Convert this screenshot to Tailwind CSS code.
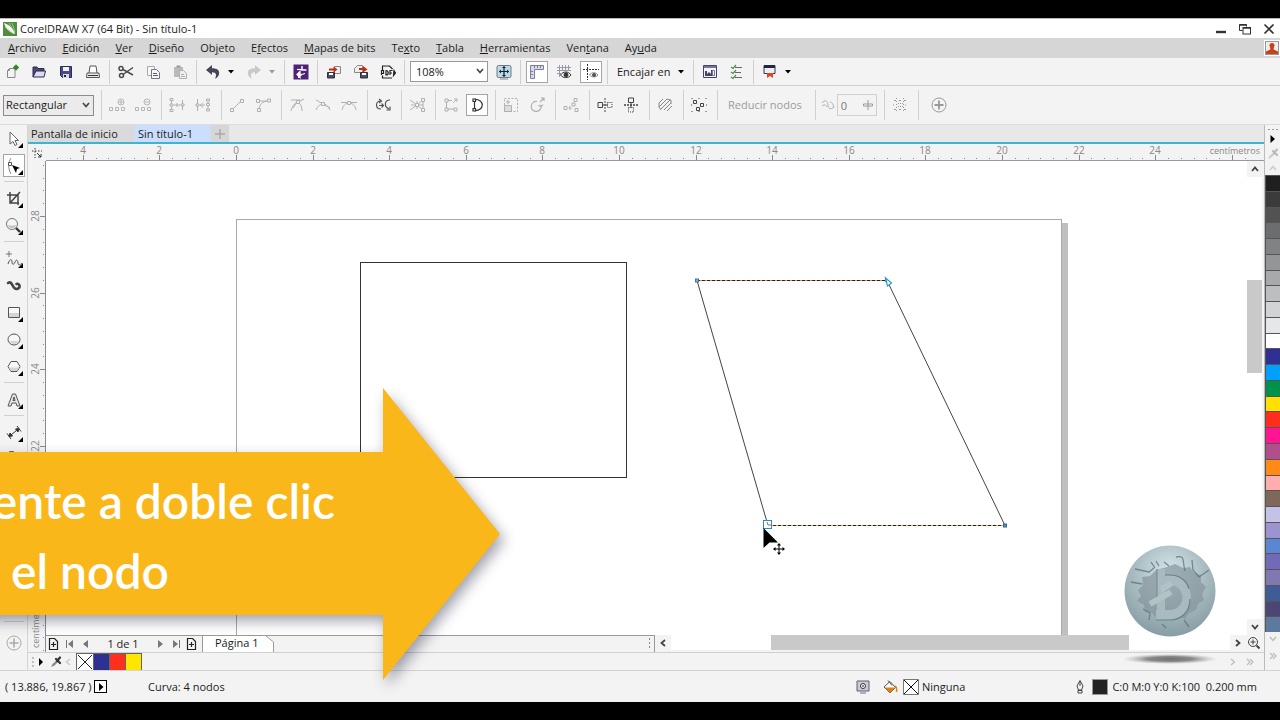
<!DOCTYPE html>
<html lang="es">
<head>
    <meta charset="UTF-8">
    <meta name="viewport" content="width=device-width, initial-scale=1.0">
    <title>CorelDRAW X7 (64 Bit) - Sin título-1</title>
    <script src="https://cdn.jsdelivr.net/npm/@tailwindcss/browser@4"></script>
    <style>
        body { font-family: 'Open Sans', 'Noto Sans', sans-serif; }
    </style>
</head>
<body class="bg-black text-[11px] leading-4 text-[#1c1c1c]">
<div class="relative flex h-screen flex-col overflow-hidden py-[18px]">

    <!-- Title bar -->
    <header class="flex h-5 shrink-0 items-center border-t border-[#bbb] bg-white pl-[3px] pr-1">
        <svg class="size-3.5" viewBox="0 0 14 14"><rect width="14" height="14" fill="#4f8f3c"/><path d="M1 1c3 1 9 4 11 11C7 11 2 6 1 1z" fill="#fff"/><path d="M6 1l6 10M2 5l9 7M9 1l3 9" stroke="#a9cf9b" stroke-width=".8"/></svg>
        <h1 class="ml-[3px]">CorelDRAW X7 (64 Bit) - Sin título-1</h1>
        <div class="ml-auto flex items-center gap-2.5">
            <button aria-label="Minimizar" class="grid size-3.5 place-items-center"><svg class="size-3" viewBox="0 0 12 12"><path d="M1 9h10" stroke="#333" stroke-width="2.4"/></svg></button>
            <button aria-label="Restaurar" class="grid size-3.5 place-items-center"><svg class="size-3" viewBox="0 0 12 12" fill="none" stroke="#333"><path d="M3.5 7.5h-3v-6h7v2"/><path d="M.5 2h7M4 5h8" stroke-width="1.5"/><rect x="4" y="4.5" width="7.5" height="6.5"/></svg></button>
            <button aria-label="Cerrar" class="grid size-3.5 place-items-center"><svg class="size-3" viewBox="0 0 12 12"><path d="M1.5 1.5l9 9M10.5 1.5l-9 9" stroke="#333" stroke-width="1.7"/></svg></button>
        </div>
    </header>

    <!-- Menu bar -->
    <nav class="flex h-5 shrink-0 items-center gap-4 bg-[#d6d6d6] pl-2">
        <a href="#"><u>A</u>rchivo</a>
        <a href="#"><u>E</u>dición</a>
        <a href="#"><u>V</u>er</a>
        <a href="#"><u>D</u>iseño</a>
        <a href="#">Ob<u>j</u>eto</a>
        <a href="#">E<u>f</u>ectos</a>
        <a href="#"><u>M</u>apas de bits</a>
        <a href="#">Te<u>x</u>to</a>
        <a href="#"><u>T</u>abla</a>
        <a href="#"><u>H</u>erramientas</a>
        <a href="#">Ven<u>t</u>ana</a>
        <a href="#">Ay<u>u</u>da</a>
        <button aria-label="Cuenta" class="ml-auto size-4 bg-white p-px"><svg class="size-3.5" viewBox="0 0 14 14"><rect x=".5" y=".5" width="13" height="13" fill="#eee" stroke="#999"/><path d="M7 2c3 0 3 3 1.7 5v1.5L13 10.5V13H1v-2.5l4.3-2V7C4 5 4 2 7 2z" fill="#c5431a"/></svg></button>
    </nav>

    <!-- Standard toolbar -->
    <div class="flex h-7 shrink-0 items-center gap-[5px] border-b border-[#d0d0d0] bg-[#f3f3f3] pl-px">
        <button aria-label="Nuevo" class="grid size-[22px] place-items-center"><svg class="size-4" viewBox="0 0 16 16" fill="none" stroke="#888"><path d="M5.5 4.5H11v9H3.500v-7zM5.500 4.500v2h-2"/><circle cx="12" cy="3.500" r="2" fill="#2c8a1e" stroke="#2c8a1e"/><path d="M12 .5v6M9 3.500h6" stroke="#2c8a1e"/></svg></button>
        <button aria-label="Abrir" class="grid size-[22px] place-items-center"><svg class="size-4" viewBox="0 0 16 16"><path d="M2 13V3h4l1 1.500h6V7" fill="#4a4a73" stroke="#2c2c50"/><path d="M2 13l3-6h9.500L13 13z" fill="#dcdcf0" stroke="#2c2c50"/></svg></button>
        <button aria-label="Guardar" class="grid size-[22px] place-items-center"><svg class="size-4" viewBox="0 0 16 16"><path d="M2.500 2.500h11v11h-9l-2-2z" fill="#4b4b86" stroke="#2c2c55"/><path d="M5 3h6v4H5z" fill="#f2f2fa"/><path d="M5 10h6v4H5z" fill="#d9d9e8"/><path d="M6 11h2v2H6z" fill="#222"/></svg></button>
        <button aria-label="Imprimir" class="grid size-[22px] place-items-center"><svg class="size-4" viewBox="0 0 16 16" fill="#fff" stroke="#555"><path d="M4 9l1-7h6l1 7"/><path d="M2 9h12l.5 4.500h-13z" fill="#ececec"/><path d="M3 11.500h10" stroke="#333"/></svg></button>
        <span class="h-6 w-px bg-[#cfcfcf]"></span>
        <button aria-label="Cortar" class="grid size-[22px] place-items-center"><svg class="size-4" viewBox="0 0 16 16" fill="none" stroke="#4a4a4a" stroke-width="1.500"><circle cx="3" cy="4.500" r="2"/><circle cx="3.500" cy="11.500" r="2"/><path d="M5 5.500l10 5.500M5 10.500L15 3.500"/></svg></button>
        <button aria-label="Copiar" class="grid size-[22px] place-items-center"><svg class="size-4" viewBox="0 0 16 16" fill="#f6f6f6" stroke="#777"><path d="M2.500 2.500h7v9h-7z" stroke="#aaa"/><path d="M6.500 5.500h5l3 3v6h-8z"/><path d="M8 9.500h4M8 11.500h5" stroke="#5c5c80"/></svg></button>
        <button aria-label="Pegar" class="grid size-[22px] place-items-center"><svg class="size-4" viewBox="0 0 16 16"><path d="M2 3h9v10H2z" fill="#b9b9b9"/><path d="M4.500 1.500h4v2h-4z" fill="#999"/><path d="M7.500 6.500h4l3 3v5h-7z" fill="#eee" stroke="#b0b0b0"/><path d="M9 10.500h3M9 12.500h4" stroke="#b0b0b0"/></svg></button>
        <span class="h-6 w-px bg-[#cfcfcf]"></span>
        <div class="flex">
            <button aria-label="Deshacer" class="grid size-[22px] place-items-center"><svg class="size-4" viewBox="0 0 16 16"><path d="M1 6l6-5v3.200c5 0 8 2 7 6-.5 2-2 3.500-4 4.500 1.500-3 2-6.500-3-6.500V11z" fill="#45455a"/></svg></button>
            <button aria-label="Lista de deshacer" class="grid w-3.5 place-items-center"><svg class="h-1 w-1.5" viewBox="0 0 6 4"><path d="M0 0h6L3 3.500z"/></svg></button>
        </div>
        <div class="flex">
            <button aria-label="Rehacer" class="grid size-[22px] place-items-center"><svg class="size-4" viewBox="0 0 16 16"><path d="M15 6L9 1v3.200c-5 0-8 2-7 6 .5 2 2 3.500 4 4.500-1.500-3-2-6.500 3-6.500V11z" fill="#c9c9c9"/></svg></button>
            <button aria-label="Lista de rehacer" class="grid w-3.5 place-items-center"><svg class="h-1 w-1.5" viewBox="0 0 6 4"><path d="M0 0h6L3 3.500z" fill="#999"/></svg></button>
        </div>
        <span class="h-6 w-px bg-[#cfcfcf]"></span>
        <button aria-label="Buscar contenido" class="grid size-[22px] place-items-center"><svg class="size-4" viewBox="0 0 16 16"><path d="M.5.500h15v15H.5z" fill="#4d2277"/><path d="M9 2v4h4.500" fill="none" stroke="#fff" stroke-width="1.500"/><path d="M5.500 14v-3.500c4 0 6 0 6-1.500M4 10.500l3-3v6z" fill="#fff" stroke="#fff" stroke-width="1.200"/><path d="M4 5.500h5" stroke="#fff" stroke-width="1.200"/></svg></button>
        <span class="h-6 w-px bg-[#cfcfcf]"></span>
        <button aria-label="Importar" class="grid size-[22px] place-items-center"><svg class="size-4" viewBox="0 0 16 16"><path d="M8.500 2.500h6v7h-6z" fill="#eee" stroke="#888"/><path d="M1.500 8.500h7v5.500h-7z" fill="#4b4b70" stroke="#333"/><path d="M3 9h4v2H3z" fill="#fff"/><path d="M3 5.500h5" stroke="#c22a12" stroke-width="2"/><path d="M7.500 2.500l4 3-4 3z" fill="#c22a12"/></svg></button>
        <button aria-label="Exportar" class="grid size-[22px] place-items-center"><svg class="size-4" viewBox="0 0 16 16"><path d="M1.500 8.500v-4l3-3h5v7z" fill="#eee" stroke="#888"/><path d="M7.500 8.500h7v5.500h-7z" fill="#4b4b70" stroke="#333"/><path d="M9 9h4v2H9z" fill="#fff"/><path d="M6 5h5" stroke="#c22a12" stroke-width="2"/><path d="M10 2l4.500 3.500L10 8.500z" fill="#c22a12"/></svg></button>
        <button aria-label="Publicar en PDF" class="grid size-[22px] place-items-center"><svg class="size-4" viewBox="0 0 16 16" fill="none" stroke="#222" stroke-width="1.200"><path d="M2.500 6V2h7l3 3M2.500 11.500V14h9.500"/><path d="M1.500 11V6.500h2v3h-2M6 11a2 2 0 100-4.500zM10 11V6.500h2.500M10 9h2"/><path d="M14 6.500l1.500 2.500-2 2.500z" fill="#222"/></svg></button>
        <span class="h-6 w-px bg-[#cfcfcf]"></span>
        <div class="relative">
            <select aria-label="Niveles de zoom" class="block h-[21px] w-[78px] appearance-none border border-[#999] bg-white pl-[5px]"><option>108%</option></select>
            <svg class="pointer-events-none absolute right-1 top-[7px] h-1.5 w-2" viewBox="0 0 8 6"><path d="M1 1l3 3.500L7 1" fill="none" stroke="#444" stroke-width="1.600"/></svg>
        </div>
        <button aria-label="Vista previa a pantalla completa" class="grid size-[22px] place-items-center"><svg class="size-4" viewBox="0 0 16 16"><rect x="1" y="1.500" width="14" height="12" rx="1.500" fill="#b9dce4" stroke="#778"/><path d="M8 3v9M3.500 7.500h9" stroke="#123" stroke-width="1.200"/><path d="M8 2l2 2H6zM8 13l2-2H6zM3 7.500l2-2v4zM13 7.500l-2-2v4z" fill="#123"/><path d="M4 15h8" stroke="#889"/></svg></button>
        <span class="h-6 w-px bg-[#cfcfcf]"></span>
        <button aria-label="Mostrar reglas" class="grid size-[22px] place-items-center border border-[#a5a5a5] bg-white"><svg class="size-4" viewBox="0 0 16 16"><path d="M1.500 1.500h13v4h-9v9h-4z" fill="#d7d9ea" stroke="#7c7f9c"/><path d="M5.500 2v2M8.500 2v2M11.500 2v2M2 7.500h2M2 10.500h2" stroke="#7c7f9c"/></svg></button>
        <button aria-label="Mostrar cuadrícula" class="grid size-[22px] place-items-center"><svg class="size-4" viewBox="0 0 16 16" fill="none" stroke="#9a9aac"><path d="M1 3.500h14M1 6.500h14M1 9.500h4M3.500 1v12M6.500 1v6M9.500 1v6M12.500 1v6"/><path d="M4.500 11c2.500-4 8-4 10.500 0-2.500 3.500-8 3.500-10.500 0z" fill="#fff" stroke="#333"/><circle cx="10" cy="10.800" r="2" fill="#333" stroke="#333"/></svg></button>
        <button aria-label="Mostrar líneas guía" class="grid size-[22px] place-items-center border border-[#a5a5a5] bg-white"><svg class="size-4" viewBox="0 0 16 16" fill="none" stroke="#333"><path d="M4.500 0v16M0 5.500h16" stroke-dasharray="2 1"/><path d="M6.500 11c2-3 6.500-3 8.500 0-2 2.500-6.500 2.500-8.500 0z" fill="#fff" stroke="#888"/><circle cx="11" cy="11" r="1.500" fill="#555" stroke="#555"/></svg></button>
        <span class="h-6 w-px bg-[#cfcfcf]"></span>
        <button class="flex items-center gap-2 px-1">Encajar en <svg class="h-1 w-1.5" viewBox="0 0 6 4"><path d="M0 0h6L3 3.500z"/></svg></button>
        <span class="h-6 w-px bg-[#cfcfcf]"></span>
        <button aria-label="Opciones" class="grid size-[22px] place-items-center"><svg class="size-4" viewBox="0 0 16 16"><path d="M1.500 1.500h13v12h-13z" fill="#f4f4fa" stroke="#44446a"/><path d="M2 2h12v2H2z" fill="#77779a"/><path d="M3 7h2v3l2-2 2 2V6h2v6H3z" fill="#44446a"/><path d="M10.500 6.500h2v5h-2z" fill="#fff" stroke="#77779a"/></svg></button>
        <button aria-label="Lista de opciones" class="grid size-[22px] place-items-center"><svg class="size-4" viewBox="0 0 16 16" fill="none"><path d="M6 3.500h7M6 8.500h6M6 13.500h7" stroke="#666"/><path d="M2 3l2 1.500L7 1M2 8l2 1.500L7 6M2 13l2 1.500L7 11" stroke="#4f8a4f" stroke-width="1.200"/></svg></button>
        <span class="h-6 w-px bg-[#cfcfcf]"></span>
        <div class="flex">
            <button aria-label="Iniciador de aplicaciones" class="grid size-[22px] place-items-center"><svg class="size-4" viewBox="0 0 16 16"><path d="M2 1.500h11v8H2z" fill="#eceef4" stroke="#333a50"/><path d="M2 1h11v3H2z" fill="#20263c"/><path d="M5 9h6v5l-3-2-3 2z" fill="#e2471b"/></svg></button>
            <button aria-label="Más aplicaciones" class="grid w-3.5 place-items-center"><svg class="h-1 w-1.5" viewBox="0 0 6 4"><path d="M0 0h6L3 3.500z"/></svg></button>
        </div>
    </div>

    <!-- Property bar -->
    <div class="flex h-[39px] shrink-0 items-center gap-1 border-b border-[#dcdcdc] bg-[#f3f3f3] pl-[3px]">
        <div class="relative">
            <select aria-label="Modo de selección" class="block h-[21px] w-[91px] appearance-none border border-[#8c8c8c] bg-[#ebebeb] pl-[2px]"><option>Rectangular</option></select>
            <svg class="pointer-events-none absolute right-1 top-[7px] h-1.5 w-2" viewBox="0 0 8 6"><path d="M1 1l3 3.500L7 1" fill="none" stroke="#444" stroke-width="1.600"/></svg>
        </div>
        <span class="h-[30px] w-1 border-r border-[#d0d0d0]"></span>
        <button aria-label="Añadir nodos" class="grid size-[22px] place-items-center"><svg class="size-4" viewBox="0 0 16 16" fill="none" stroke="#b5b5b5"><path d="M.5 10.500h3v3h-3zM6.500 10.500h3v3h-3zM12.500 10.500h3v3h-3z"/><circle cx="12" cy="5" r="3"/><path d="M12 3v4M10 5h4"/></svg></button>
        <button aria-label="Eliminar nodos" class="grid size-[22px] place-items-center"><svg class="size-4" viewBox="0 0 16 16" fill="none" stroke="#b5b5b5"><path d="M.5 10.500h3v3h-3zM6.500 10.500h3v3h-3zM12.500 10.500h3v3h-3z"/><circle cx="12" cy="5" r="3"/><path d="M10 5h4"/></svg></button>
        <span class="h-[30px] w-1 border-r border-[#d0d0d0]"></span>
        <button aria-label="Unir dos nodos" class="grid size-[22px] place-items-center"><svg class="size-4" viewBox="0 0 16 16" fill="none" stroke="#b0b0b0"><path d="M2.500 3.500v3M2.500 9.500v3M13.500 3v10M5 8h6M8 6v4"/><path d="M1 1.500h3v2H1zM1 7h3v2H1zM12 7h3v2h-3zM1 12.500h3v2H1z" fill="#f3f3f3"/></svg></button>
        <button aria-label="Separar curva" class="grid size-[22px] place-items-center"><svg class="size-4" viewBox="0 0 16 16" fill="none" stroke="#b0b0b0"><path d="M2.500 2v12M13 4v2M13 9v4M5 8h5M8 5.500L5.500 8 8 10.500"/><path d="M1 7h3v2H1zM11.500 2h3v2h-3zM11.500 6.500h3v2h-3zM11.500 12h3v2h-3z" fill="#f3f3f3"/></svg></button>
        <span class="h-[30px] w-1 border-r border-[#d0d0d0]"></span>
        <button aria-label="Convertir a línea" class="grid size-[22px] place-items-center"><svg class="size-4" viewBox="0 0 16 16" fill="none" stroke="#b0b0b0"><path d="M3.500 12.500l9-9"/><path d="M1.500 11.500h3v3h-3zM11.500 2.500h3v3h-3z" fill="#f3f3f3"/></svg></button>
        <button aria-label="Convertir a curvas" class="grid size-[22px] place-items-center"><svg class="size-4" viewBox="0 0 16 16" fill="none" stroke="#b0b0b0"><path d="M4 13c0-5 3-9 10-9"/><path d="M3.500 4h8"/><path d="M2.500 11.500h3v3h-3zM1.500 2.500h3v3h-3zM12.500 2h3v3h-3z" fill="#f3f3f3"/></svg></button>
        <span class="h-[30px] w-1 border-r border-[#d0d0d0]"></span>
        <button aria-label="Nodo asimétrico" class="grid size-[22px] place-items-center"><svg class="size-4" viewBox="0 0 16 16" fill="none" stroke="#b0b0b0"><path d="M2 14c1-4 3-8 7-9M9 5c3 2 4 5 4 9M8 5L4 11M9 5l6-3M2 3h9"/><path d="M7.500 3.500h3v3h-3z" fill="#f3f3f3"/></svg></button>
        <button aria-label="Nodo uniforme" class="grid size-[22px] place-items-center"><svg class="size-4" viewBox="0 0 16 16" fill="none" stroke="#b0b0b0"><path d="M1 13c1-3 4-6 7-6s6 3 7 6M1 3l14 8"/><path d="M6.500 5.500h3v3h-3z" fill="#f3f3f3"/></svg></button>
        <button aria-label="Nodo simétrico" class="grid size-[22px] place-items-center"><svg class="size-4" viewBox="0 0 16 16" fill="none" stroke="#b0b0b0"><path d="M1 13c1-5 4-7 7-7s6 2 7 7M0 5.500h16"/><path d="M6.500 4.500h3v3h-3z" fill="#f3f3f3"/></svg></button>
        <span class="h-[30px] w-1 border-r border-[#d0d0d0]"></span>
        <button aria-label="Invertir dirección" class="grid size-[22px] place-items-center"><svg class="size-4" viewBox="0 0 16 16" fill="none" stroke="#555" stroke-width="1.200"><path d="M6 4C0 4 0 12 6 12M4 2l2.500 2L4 6M4 8.500h4M6.500 6.500l2 2-2 2M15 3c-6 0-6 7-1 9M15 9.500v3.500h-3.500"/></svg></button>
        <span class="h-[30px] w-1 border-r border-[#d0d0d0]"></span>
        <button aria-label="Extraer subtrayecto" class="grid size-[22px] place-items-center"><svg class="size-4" viewBox="0 0 16 16" fill="none" stroke="#b0b0b0"><path d="M1 3l7 5-7 5M14 3L8 8l6 5M8 4v8M14 3v10M2 8h12"/><path d="M6.500 6.500h3v3h-3zM12.500 1.500h3v3h-3zM12.500 11.500h3v3h-3z" fill="#f3f3f3"/></svg></button>
        <span class="h-[30px] w-1 border-r border-[#d0d0d0]"></span>
        <button aria-label="Extender curva" class="grid size-[22px] place-items-center"><svg class="size-4" viewBox="0 0 16 16" fill="none" stroke="#b0b0b0"><path d="M3.500 5v7h8M5 3.500h4"/><path d="M2 2h3v3H2zM2 11h3v3H2zM11 11h3v3h-3z" fill="#f3f3f3"/><path d="M10 6l4-4M11 2h3v3"/></svg></button>
        <button aria-label="Cerrar curva" class="grid size-[22px] place-items-center border border-[#a5a5a5] bg-white"><svg class="size-4" viewBox="0 0 16 16" fill="none" stroke="#333" stroke-width="1.200"><path d="M5 2.500c11-1 11 12 0 11M5.500 5v6"/><path d="M4 2h2.500v2.500H4zM4 11.500h2.500V14H4z" fill="#fff"/></svg></button>
        <span class="h-[30px] w-1 border-r border-[#d0d0d0]"></span>
        <button aria-label="Estirar nodos" class="grid size-[22px] place-items-center"><svg class="size-4" viewBox="0 0 16 16" fill="none" stroke="#b0b0b0"><path d="M1.500 1.500h13v13h-13z" stroke-dasharray="2 1.500"/><path d="M1.500 8.500h7v6h-7z" fill="#ddd"/><path d="M5 3v4M3 5h4"/></svg></button>
        <button aria-label="Rotar nodos" class="grid size-[22px] place-items-center"><svg class="size-4" viewBox="0 0 16 16" fill="none" stroke="#b0b0b0" stroke-width="1.200"><path d="M12 8a5 5 0 11-4-3.500M9.500 8l2.500 2 2-2.500M11 5l4-4M12 1h3v3"/></svg></button>
        <span class="h-[30px] w-1 border-r border-[#d0d0d0]"></span>
        <button aria-label="Alinear nodos" class="grid size-[22px] place-items-center"><svg class="size-4" viewBox="0 0 16 16" fill="none" stroke="#b0b0b0"><path d="M1 9.500h3v3H1zM11 1.500h3v3h-3zM12 11.500h3v3h-3zM7 9v4M5.500 11h3M9 6h3v3H9z"/></svg></button>
        <span class="h-[30px] w-1 border-r border-[#d0d0d0]"></span>
        <button aria-label="Reflejar horizontalmente" class="grid size-[22px] place-items-center"><svg class="size-4" viewBox="0 0 16 16" fill="none" stroke="#444"><path d="M1 5.500h4.500v5H1z"/><path d="M10.500 5.500H15v5h-4.500z" stroke-dasharray="1 1"/><path d="M8 1v14" stroke-dasharray="2 1"/><path d="M5 8h6"/></svg></button>
        <button aria-label="Reflejar verticalmente" class="grid size-[22px] place-items-center"><svg class="size-4" viewBox="0 0 16 16" fill="none" stroke="#444"><path d="M5.500 1h5v4.500h-5z"/><path d="M5.500 10.500h5V15h-5z" stroke-dasharray="1 1"/><path d="M1 8h14" stroke-dasharray="2 1" stroke-width="1.500"/><path d="M8 5v6"/></svg></button>
        <span class="h-[30px] w-1 border-r border-[#d0d0d0]"></span>
        <button aria-label="Modo elástico" class="grid size-[22px] place-items-center"><svg class="size-4" viewBox="0 0 16 16" fill="none" stroke="#888"><path d="M2 6l4-4M2 10l8-8M4 12l9-9M7 13l7-7M10 14l5-5M2 6v4l2 3M10 2l4 1v4"/></svg></button>
        <span class="h-[30px] w-1 border-r border-[#d0d0d0]"></span>
        <button aria-label="Seleccionar todos los nodos" class="grid size-[22px] place-items-center"><svg class="size-4" viewBox="0 0 16 16" fill="none" stroke="#444"><path d="M2.500 3.500h3v3h-3zM9.500 6.500h3v3h-3zM5.500 10.500h3v3h-3z"/><path d="M.5 1.500h15v13H.5z" stroke-dasharray="1 6"/></svg></button>
        <span class="h-[30px] w-1 border-r border-[#d0d0d0]"></span>
        <button class="px-1.5 text-[#9b9b9b]">Reducir nodos</button>
        <span class="h-[30px] w-1 border-r border-[#d0d0d0]"></span>
        <label class="flex items-center text-[#777]">
            <svg class="mr-px size-4" viewBox="0 0 16 16" fill="none" stroke="#b0b0b0"><path d="M2 6c3-4 6-2 6 2s3 5 6 2M2 9c3-2 4-1 5 1M10 5c2 0 3 2 4 6"/></svg>
            <span class="relative">
                <input type="text" aria-label="Suavidad de curva" value="0" class="block h-[22px] w-10 border border-[#d0d0d0] bg-transparent pl-[3px]">
                <svg class="pointer-events-none absolute right-1 top-1.5 size-2.5" viewBox="0 0 10 10" fill="#fff" stroke="#999"><path d="M.5 4h9v2h-9zM5 0v10"/></svg>
            </span>
        </label>
        <span class="h-[30px] w-1 border-r border-[#d0d0d0]"></span>
        <button aria-label="Recuadro delimitador" class="grid size-[22px] place-items-center"><svg class="size-4" viewBox="0 0 16 16" fill="none" stroke="#999"><path d="M2 3.500h12M2 12.500h12" stroke-dasharray="2 3"/><path d="M4.500 1v14M11.500 1v14" stroke-dasharray="1 2"/><path d="M6 6.500h5M6 9.500h5M1 8h2M13 8h2" stroke-dasharray="1 1"/></svg></button>
        <span class="h-[30px] w-1 border-r border-[#d0d0d0]"></span>
        <button aria-label="Personalizar" class="grid h-[22px] w-8 place-items-center"><svg class="size-4" viewBox="0 0 16 16" fill="none" stroke="#999"><circle cx="8" cy="8" r="7"/><path d="M8 3.500v9M3.500 8h9" stroke-width="1.800"/></svg></button>
    </div>

    <div class="flex min-h-0 flex-1 bg-[#f3f3f3]">

        <!-- Toolbox -->
        <aside class="flex w-7 shrink-0 flex-col items-center gap-1 border-r border-[#d4d4d4] pb-4 pt-[2px]">
            <button aria-label="Selección" class="grid h-[23px] w-[22px] shrink-0 place-items-center"><svg class="size-[18px]" viewBox="0 0 18 18"><path d="M5 2v12l3-2.500 2 4 2-1-2-4h3.500z" fill="#fff" stroke="#666"/><path d="M18 13v5h-5z"/></svg></button>
            <button aria-label="Forma" class="grid h-[23px] w-[22px] shrink-0 place-items-center border border-[#a5a5a5] bg-white"><svg class="size-[18px]" viewBox="0 0 18 18"><path d="M6 1C3 5 3 12 6 17" fill="none" stroke="#888"/><path d="M3.500 5.500h3v3h-3z" fill="#fff" stroke="#555"/><path d="M7 8l8 3-3 1-1 4z"/><path d="M18 13v5h-5z"/></svg></button>
            <span class="h-0.5 w-5 shrink-0 border-t border-[#d0d0d0]"></span>
            <button aria-label="Recortar" class="grid h-[23px] w-[22px] shrink-0 place-items-center"><svg class="size-[18px]" viewBox="0 0 18 18" fill="none" stroke="#444" stroke-width="1.500"><path d="M5 2v11h9M2 5h11v10M5 13l10-11"/><path d="M18 13v5h-5z" fill="#000" stroke="none"/></svg></button>
            <button aria-label="Zoom" class="grid h-[23px] w-[22px] shrink-0 place-items-center"><svg class="size-[18px]" viewBox="0 0 18 18"><circle cx="7" cy="7" r="5.500" fill="#f4f4f4" stroke="#777"/><path d="M3 8c2 1 6 1 8 0-1 4-7 4-8 0z" fill="#bbb"/><path d="M11 11l4 4" stroke="#333" stroke-width="2.400"/><path d="M18 13v5h-5z"/></svg></button>
            <span class="h-0.5 w-5 shrink-0 border-t border-[#d0d0d0]"></span>
            <button aria-label="Mano alzada" class="grid h-[23px] w-[22px] shrink-0 place-items-center"><svg class="size-[18px]" viewBox="0 0 18 18" fill="none" stroke="#777"><path d="M4 1v6M1 4h6"/><path d="M3 14c2-6 4-5 4-2s2 3 3 0 3-2 3 1 2 2 4 0" stroke="#555"/><path d="M18 13v5h-5z" fill="#000" stroke="none"/></svg></button>
            <button aria-label="Medios artísticos" class="grid h-[23px] w-[22px] shrink-0 place-items-center"><svg class="size-[18px]" viewBox="0 0 18 18" fill="none" stroke="#444" stroke-linecap="round"><path d="M3 6c5-3 4 7 9 6 4-1 3-6-.5-5" stroke-width="2.600"/></svg></button>
            <button aria-label="Rectángulo" class="grid h-[23px] w-[22px] shrink-0 place-items-center"><svg class="size-[18px]" viewBox="0 0 18 18"><path d="M3.500 3.500h11v10h-11z" fill="#f8f8f8" stroke="#555"/><path d="M4 9h10v4H4z" fill="#d5d5d5"/><path d="M18 13v5h-5z"/></svg></button>
            <button aria-label="Elipse" class="grid h-[23px] w-[22px] shrink-0 place-items-center"><svg class="size-[18px]" viewBox="0 0 18 18"><ellipse cx="9" cy="8.500" rx="6" ry="5.500" fill="#f8f8f8" stroke="#555"/><path d="M4 10h10c-2 4-8 4-10 0z" fill="#d5d5d5"/><path d="M18 13v5h-5z"/></svg></button>
            <button aria-label="Polígono" class="grid h-[23px] w-[22px] shrink-0 place-items-center"><svg class="size-[18px]" viewBox="0 0 18 18"><path d="M6 3.500h6l3 5-3 5H6l-3-5z" fill="#f8f8f8" stroke="#555"/><path d="M4 9.500h10L12 13H6z" fill="#d5d5d5"/><path d="M18 13v5h-5z"/></svg></button>
            <span class="h-0.5 w-5 shrink-0 border-t border-[#d0d0d0]"></span>
            <button aria-label="Texto" class="grid h-[23px] w-[22px] shrink-0 place-items-center"><svg class="size-[18px]" viewBox="0 0 18 18"><path d="M3 15L7.500 3h3L15 15h-3l-1-3H7l-1 3zM8 9.500h2L9 6z" fill="#e4e4ea" stroke="#555"/><path d="M18 13v5h-5z"/></svg></button>
            <span class="h-0.5 w-5 shrink-0 border-t border-[#d0d0d0]"></span>
            <button aria-label="Cota paralela" class="grid h-[23px] w-[22px] shrink-0 place-items-center"><svg class="size-[18px]" viewBox="0 0 18 18" stroke="#333"><path d="M4 12.500l10-8M2 9.500l4 5.500M12 2l4 5.500" fill="none"/><path d="M4 12.500l1-3.500 2.500 3zM14 4.500L10.500 5l2.500 3z" fill="#333"/><path d="M18 13v5h-5z" fill="#000" stroke="none"/></svg></button>
            <button aria-label="Conector" class="grid h-[23px] w-[22px] shrink-0 place-items-center"><svg class="size-[18px]" viewBox="0 0 18 18" fill="none" stroke="#666"><path d="M4.500.500h4v4h-4z" fill="#ef7f1a"/><path d="M8 5l6 6"/></svg></button>
            <span class="mt-auto h-0.5 w-5 shrink-0 border-t border-[#d0d0d0]"></span>
            <button aria-label="Personalizar caja de herramientas" class="mt-1 grid h-[23px] w-[22px] shrink-0 place-items-center"><svg class="size-4" viewBox="0 0 16 16" fill="none" stroke="#aaa"><circle cx="8" cy="8" r="7"/><path d="M8 3.500v9M3.500 8h9" stroke-width="1.600"/></svg></button>
        </aside>

        <!-- Document window -->
        <main class="flex min-w-0 flex-1 flex-col">
            <div class="flex h-[19px] shrink-0 items-stretch border-b-2 border-[#3fb3d2] bg-[#e8e8e8]">
                <button class="w-[106px] bg-[#dadada] pl-[3px] text-left">Pantalla de inicio</button>
                <button class="w-[77px] bg-[#cbdffc] pl-1 text-left">Sin título-1</button>
                <button aria-label="Nueva pestaña" class="grid w-[18px] place-items-center bg-[#d6d6d6]"><svg class="size-2.5" viewBox="0 0 10 10"><path d="M5 0v10M0 5h10" stroke="#aaa" stroke-width="1.500"/></svg></button>
            </div>

            <!-- Horizontal ruler -->
            <div class="flex h-[17px] shrink-0">
                <div class="grid w-[18px] place-items-center"><svg class="size-3" viewBox="0 0 12 12" fill="none" stroke="#333"><path d="M4 1v10M1 4h10" stroke-dasharray="1.500 1.500"/><path d="M6 6l4 4M7 10h3V7"/></svg></div>
                <svg id="rulerX" class="h-full min-w-0 flex-1 border-b border-[#999] text-[10px]" fill="#888"></svg>
            </div>

            <div class="flex min-h-0 flex-1">
                <svg id="rulerY" class="h-full w-[18px] shrink-0 border-r border-[#8a8a8a] text-[10px]" fill="#888"></svg>

                <div class="flex min-w-0 flex-1 flex-col">
                    <div class="flex min-h-0 flex-1">
                        <svg class="h-full min-w-0 flex-1 bg-white" fill="none">
                            <!-- page -->
                            <rect x="1016" y="62" width="6" height="1200" fill="#bfbfbf"/>
                            <rect x="190.500" y="58.500" width="825" height="1200" fill="#fff" stroke="#a9a9a9"/>
                            <rect x="314.500" y="101.500" width="266" height="215" stroke="#333"/>
                            <!-- edited curve -->
                            <path d="M651 119.500L722 364.500M841 119.500L959 364.500" stroke="#444"/>
                            <path d="M651 119.500H841" stroke="#f08060"/>
                            <path d="M722 364.500H959" stroke="#e8b050"/>
                            <path d="M651 119.500H841M722 364.500H959" stroke="#222" stroke-dasharray="3 2"/>
                            <rect x="649.500" y="118" width="3" height="3" fill="#8bb0cc" stroke="#3c78a8"/>
                            <rect x="957.500" y="363" width="3" height="3" fill="#6a8fae" stroke="#2f6795"/>
                            <path d="M839.500 116v5M839.500 117l6 5-4 3z" fill="#fff" stroke="#2f9ac8" stroke-width="1.200"/>
                            <rect x="717.500" y="359.500" width="8" height="8" fill="#fff" stroke="#2a8fbe"/>
                            <path d="M721 361l1 3h4" stroke="#777"/>
                            <!-- pointer -->
                            <path d="M717.500 367v20l6-5.500h8.500z" fill="#000"/>
                            <path d="M733 383v10M728 388h10" stroke="#000"/>
                            <path d="M733 382l2 2.500h-4zM733 394l2-2.500h-4zM727 388l2.500-2v4zM739 388l-2.500-2v4z" fill="#000"/>
                        </svg>
                        <!-- Vertical scroll bar -->
                        <div class="mr-0.5 flex w-[15px] shrink-0 flex-col">
                            <button aria-label="Desplazar arriba" class="grid h-4 place-items-center"><svg class="h-1.5 w-2" viewBox="0 0 8 6"><path d="M1 5l3-3.500L7 5" fill="none" stroke="#444" stroke-width="1.800"/></svg></button>
                            <span class="grow-[23] bg-white"></span>
                            <span class="grow-[21] bg-[#c9c9c9]"></span>
                            <span class="grow-[55] bg-white"></span>
                            <button aria-label="Desplazar abajo" class="grid h-4 place-items-center"><svg class="h-1.5 w-2" viewBox="0 0 8 6"><path d="M1 1l3 3.500L7 1" fill="none" stroke="#444" stroke-width="1.800"/></svg></button>
                        </div>
                    </div>

                    <!-- Page navigator and horizontal scroll bar -->
                    <div class="mr-0.5 flex h-[17px] shrink-0">
                        <div class="flex min-w-0 flex-1 items-center border-r border-t border-[#999]">
                            <button aria-label="Añadir página" class="grid w-4 place-items-center"><svg class="size-3" viewBox="0 0 12 12" fill="none" stroke="#222"><path d="M1.500.500h5l3 3v8h-8zM5.500 4v5M3 6.500h5" stroke-width="1.200"/></svg></button>
                            <button aria-label="Primera página" class="grid w-4 place-items-center"><svg class="size-2.5" viewBox="0 0 10 10" fill="#777"><path d="M1 1h1v8H1zM8 1v8L3 5z"/></svg></button>
                            <button aria-label="Página anterior" class="grid w-4 place-items-center"><svg class="size-2.5" viewBox="0 0 10 10" fill="#777"><path d="M7 1v8L2 5z"/></svg></button>
                            <span class="w-[58px] text-center">1 de 1</span>
                            <button aria-label="Página siguiente" class="grid w-4 place-items-center"><svg class="size-2.5" viewBox="0 0 10 10" fill="#777"><path d="M3 1v8l5-4z"/></svg></button>
                            <button aria-label="Última página" class="grid w-4 place-items-center"><svg class="size-2.5" viewBox="0 0 10 10" fill="#777"><path d="M8 1h1v8H8zM2 1v8l5-4z"/></svg></button>
                            <button aria-label="Añadir página al final" class="grid w-4 place-items-center"><svg class="size-3" viewBox="0 0 12 12" fill="none" stroke="#222"><path d="M1.500.500h5l3 3v8h-8zM5.500 4v5M3 6.500h5" stroke-width="1.200"/></svg></button>
                            <button class="ml-0.5 flex h-full items-start border-l border-[#999] bg-white pl-3 leading-[14px]">Página 1<svg class="ml-2 h-4 w-2" viewBox="0 0 8 16"><path d="M0 0l8 6v10h2V0z" fill="#f3f3f3"/><path d="M0 0l7.500 6v10" fill="none" stroke="#999"/></svg></button>
                            <svg class="ml-auto mr-1 h-3 w-px" viewBox="0 0 1 12"><path d="M.5 0v12" stroke="#888" stroke-dasharray="2 2"/></svg>
                        </div>
                        <div class="flex h-[15px] min-w-0 flex-1">
                            <button aria-label="Desplazar a la izquierda" class="grid w-4 place-items-center"><svg class="h-2 w-1.5" viewBox="0 0 6 8"><path d="M5 1L1.500 4 5 7" fill="none" stroke="#444" stroke-width="1.800"/></svg></button>
                            <div class="flex flex-1 bg-white"><span class="ml-[18%] w-[64%] bg-[#c9c9c9]"></span></div>
                            <button aria-label="Desplazar a la derecha" class="grid w-4 place-items-center"><svg class="h-2 w-1.5" viewBox="0 0 6 8"><path d="M1 1l3.500 3L1 7" fill="none" stroke="#444" stroke-width="1.800"/></svg></button>
                            <button aria-label="Navegador" class="grid w-4 place-items-center"><svg class="size-3" viewBox="0 0 12 12" fill="none" stroke="#444"><circle cx="5" cy="5" r="4.500"/><path d="M5 2.500v5M2.500 5h5"/><path d="M8.500 8.500l3 3" stroke-width="2"/></svg></button>
                        </div>
                    </div>
                </div>
            </div>

            <!-- Document palette -->
            <div class="flex h-[18px] shrink-0 items-center border-t border-[#d0d0d0] pl-1">
                <svg class="mr-px h-2.5 w-0.5" viewBox="0 0 2 10"><path d="M1 0v10" stroke="#888" stroke-dasharray="2 2"/></svg>
                <button aria-label="Menú de paleta" class="grid w-3 place-items-center"><svg class="size-2" viewBox="0 0 8 8"><path d="M2 0v8l4-4z"/></svg></button>
                <button aria-label="Cuentagotas" class="ml-[3px] mr-px grid w-3 place-items-center"><svg class="size-3" viewBox="0 0 12 12"><path d="M1 11l1.500-3L7 4l1.500 1.500-4 4z" fill="#888"/><path d="M6 3l4 4M7 5l3-3.500" stroke="#333" stroke-width="2.200" stroke-linecap="round"/></svg></button>
                <button aria-label="Anterior" class="mr-[3px] grid w-2.5 place-items-center"><svg class="h-2 w-1.5" viewBox="0 0 6 8"><path d="M5 1L1.500 4 5 7" fill="none" stroke="#ccc" stroke-width="1.600"/></svg></button>
                <div class="flex border border-[#666]">
                    <button aria-label="Sin color" class="size-4 bg-white"><svg class="size-4" viewBox="0 0 16 16"><path d="M1 1l14 14M15 1L1 15" stroke="#222"/></svg></button>
                    <button aria-label="Azul" class="size-4 border-l border-[#666] bg-[#2e3192]"></button>
                    <button aria-label="Rojo" class="size-4 border-l border-[#666] bg-[#ff2f1f]"></button>
                    <button aria-label="Amarillo" class="size-4 border-l border-[#666] bg-[#ffe600]"></button>
                </div>
                <svg class="ml-auto mr-2.5 h-2 w-1.5" viewBox="0 0 6 8"><path d="M1 1l3.500 3L1 7" fill="none" stroke="#bbb" stroke-width="1.200"/></svg>
                <svg class="mr-2.5 h-2 w-2" viewBox="0 0 8 8"><path d="M1 1l3 3-3 3M4 1l3 3-3 3" fill="none" stroke="#bbb" stroke-width="1.200"/></svg>
            </div>
        </main>

        <!-- Colour palette -->
        <aside class="flex w-4 shrink-0 flex-col border-l border-[#bbb]">
            <div class="flex h-[50px] shrink-0 flex-col items-center justify-between py-1">
                <svg class="h-px w-2.5" viewBox="0 0 10 1"><path d="M0 .5h10" stroke="#999" stroke-dasharray="2 2"/></svg>
                <svg class="size-2" viewBox="0 0 8 8"><path d="M1.500 0v8L6 4z"/></svg>
                <svg class="size-3" viewBox="0 0 12 12"><path d="M1 11l1.500-3L7 4l1.500 1.500-4 4z" fill="#ccc"/><path d="M6 3l4 4M7 5l3-3.500" stroke="#bbb" stroke-width="2.200" stroke-linecap="round"/></svg>
                <svg class="h-1.5 w-2" viewBox="0 0 8 6"><path d="M1 5l3-3.500L7 5" fill="none" stroke="#ccc" stroke-width="1.600"/></svg>
            </div>
            <div id="palette" class="flex min-h-0 flex-1 flex-col border-l border-[#555]"></div>
            <div class="flex h-[38px] shrink-0 flex-col items-center gap-2.5 pt-1">
                <svg class="h-1.5 w-2" viewBox="0 0 8 6"><path d="M1 1l3 3.500L7 1" fill="none" stroke="#bbb" stroke-width="1.400"/></svg>
                <svg class="h-2 w-2" viewBox="0 0 8 8"><path d="M1 1l3 3-3 3M4 1l3 3-3 3" fill="none" stroke="#bbb" stroke-width="1.200"/></svg>
            </div>
        </aside>
    </div>

    <!-- Status bar -->
    <footer class="flex h-8 shrink-0 items-center border-t border-[#d4d4d4] bg-[#f3f3f3] pl-[5px] pr-[23px]">
        <span class="w-[89px]">( 13.886, 19.867 )</span>
        <button aria-label="Más información" class="grid size-[13px] place-items-center border border-black bg-white"><svg class="size-2" viewBox="0 0 8 8"><path d="M2 0v8l4.500-4z"/></svg></button>
        <span class="ml-[41px]">Curva: 4 nodos</span>
        <div class="ml-auto flex items-center">
            <svg class="size-3.5" viewBox="0 0 14 14"><path d="M1 1h12v10H1z" fill="#d9c4c4" stroke="#55607c"/><path d="M3 3h8v6H3z" fill="#b9d2ea"/><circle cx="7" cy="6" r="2.500" fill="#fff" stroke="#333"/><circle cx="7" cy="6" r=".8"/><path d="M4 13h6" stroke="#4a7bb5"/></svg>
            <svg class="ml-3 size-4" viewBox="0 0 16 16"><path d="M2 8l6-5.500 5.500 6L8 14z" fill="#fff" stroke="#555"/><path d="M2.500 8.500h11L8 14z" fill="#d9821c"/><path d="M6 1.500l4 5" stroke="#555"/><path d="M13 7c2 1 2 3 1.500 6" stroke="#d9821c" stroke-width="1.500" fill="none"/></svg>
            <svg class="ml-[5px] size-4" viewBox="0 0 16 16"><path d="M.5.500h15v15H.5z" fill="#fff" stroke="#777"/><path d="M1 1l14 14M15 1L1 15" stroke="#111"/></svg>
            <span class="ml-[3px]">Ninguna</span>
        </div>
        <div class="ml-[108px] flex items-center">
            <svg class="size-3.5" viewBox="0 0 14 14" fill="none" stroke="#444"><path d="M7 .5L4 6l1.500 4h3L10 6zM7 1v5"/><path d="M5 10.500h4v2.500H5z"/></svg>
            <span class="ml-[5px] size-4 border border-[#999] bg-[#232323]"></span>
            <span class="ml-1 whitespace-pre">C:0 M:0 Y:0 K:100  0.200 mm</span>
        </div>
    </footer>

    <!-- Sphere watermark -->
    <svg class="absolute bottom-[54px] right-[62px] h-[122px] w-24" viewBox="0 0 96 122">
        <defs>
            <radialGradient id="ball" cx=".5" cy=".3" r=".7"><stop offset="0" stop-color="#d6e8ea"/><stop offset=".55" stop-color="#a9bcc1"/><stop offset="1" stop-color="#869da3"/></radialGradient>
            <radialGradient id="floor"><stop offset="0" stop-color="#6f6f6f"/><stop offset=".5" stop-color="#8a8a8a"/><stop offset="1" stop-color="#bbb" stop-opacity="0.100"/></radialGradient>
        </defs>
        <circle cx="48" cy="47" r="45.500" fill="url(#ball)"/>
        <path d="M34 26l-6 6-8 1 1 8-5 5 3 6-4 5 7 4 1 7 7 1 5 6 7-2 6 3 7-3 8 2 4-6 7-3 2-6 6-4-2-6 4-7-5-5 0-7-7-2-4-6-7 1-8-4-8 3z" fill="#84959c" opacity=".7"/>
        <path d="M13 25l14 3 5-4M29 18l4 6M34 17l3 5M42 18l5 4M54 13c10-2 6 4 9 14M70 16l1 10 6 7 10-7M21 65l7 4-1 7M40 80l4 4M62 76l5 7M9 38l11 2" fill="none" stroke="#60767b" stroke-width="1.300" opacity=".8"/>
        <path d="M42 31h6c28 0 28 45 0 45H34V66h13c18 0 18-25 0-25h-5" fill="#a9bbbf"/>
        <path d="M42 31h6c10 0 17 6 19 14M34 76h14c12 0 20-9 20-21" fill="none" stroke="#6c8085" stroke-width="1.200"/>
        <path d="M39 25v45" stroke="#a9bbbf" stroke-width="8"/>
        <path d="M35 25v32" stroke="#75888d"/>
        <path d="M28 60l21-12M39 46l11-7" stroke="#b3c2c5" stroke-width="6"/>
        <ellipse cx="48" cy="115" rx="46" ry="5" fill="url(#floor)"/>
    </svg>

    <!-- Callout arrow -->
    <div class="absolute left-0 top-[380px] h-[310px] w-[510px]">
        <svg class="absolute inset-0 size-full overflow-visible drop-shadow-[4px_6px_7px_rgba(20,20,50,0.4)]" viewBox="0 0 510 310"><path d="M-20 72H383V8L500 154 383 300V235H-20z" fill="#fab71a"/></svg>
        <p class="absolute right-[175px] top-[86px] whitespace-nowrap font-['Lato'] text-[48px] font-semibold leading-[70px] text-white">ente a doble clic</p>
        <p class="absolute left-[11px] top-[156px] whitespace-nowrap font-['Lato'] text-[48px] font-semibold leading-[70px] text-white">el nodo</p>
    </div>
</div>

<script>
    // Rulers: one centimetre is 38.3 px at 108 %
    const cm = 38.3;

    function tick(x, y, w, h) {
        return `<rect x="${Math.round(x)}" y="${Math.round(y)}" width="${w}" height="${h}" fill="#888"/>`;
    }

    let out = '';
    for (let i = -15; i <= 79; i++) {
        const x = 190 + i * cm / 3;
        out += i % 6 === 0 ? tick(x, 11, 1, 5) : tick(x, 14, 1, 1);
        if (i % 6 === 0 && i / 3 <= 24) {
            out += `<text x="${Math.round(x)}" y="10" text-anchor="middle">${Math.abs(i / 3)}</text>`;
        }
    }
    out += '<text x="1214" y="10" font-size="9" text-anchor="end">centímetros</text>';
    document.getElementById('rulerX').innerHTML = out;

    out = '';
    for (let i = 0; i <= 40; i++) {
        const y = 55 + (i - 4) * cm / 3;
        const major = (i - 4) % 6 === 0;
        out += major ? tick(12, y, 5, 1) : tick(15, y, 1, 1);
        if (major && i < 30) {
            out += `<text transform="translate(11 ${Math.round(y)}) rotate(-90)" text-anchor="middle">${28 - (i - 4) / 3}</text>`;
        }
    }
    out += '<text transform="translate(11 487) rotate(-90)" font-size="9">centímetros</text>';
    document.getElementById('rulerY').innerHTML = out;

    // Colour wells
    const colours = ['#1f1f1f', '#3b3b3b', '#525252', '#6b6d70', '#808285', '#939598', '#a7a9ac', '#bcbec0', '#d1d3d4', '#e6e7ea',
        '#ffffff', '#2e3192', '#00a0ff', '#00924a', '#ffe000', '#ff2d1e', '#ff1493', '#b0508a', '#ff8a17', '#ffaeb0',
        '#7f675a', '#c3c3e6', '#9c93cf', '#5b86d4', '#706ab8', '#8078b0', '#3f5c96', '#4c4673', '#5d7a9e'];
    document.getElementById('palette').innerHTML = colours.map(c =>
        `<button aria-label="${c}" class="min-h-0 flex-1 border-t border-[#555]" style="background-color:${c}"></button>`).join('');
</script>
</body>
</html>
